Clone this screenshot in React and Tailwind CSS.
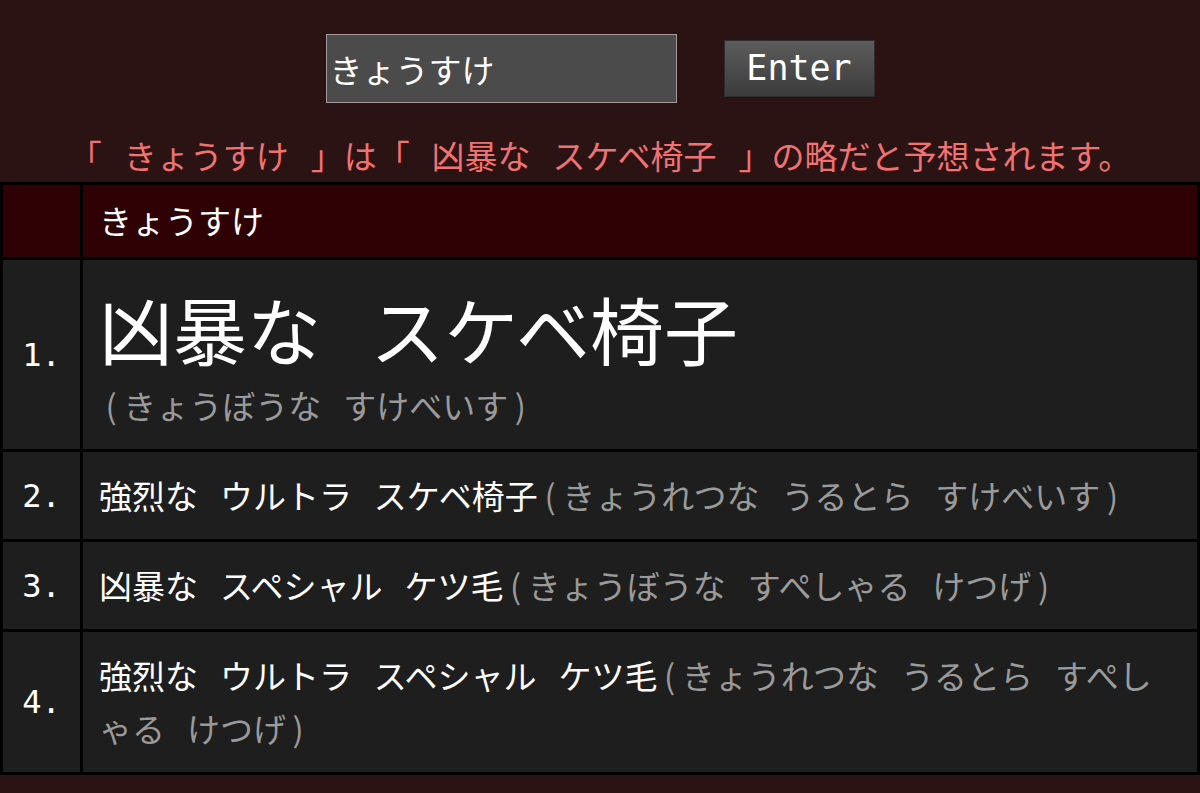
import React from "react";

const jp = { fontFamily: '"Noto Sans CJK JP", "Noto Sans", sans-serif' };
const mono = { fontFamily: '"DejaVu Sans Mono", "Liberation Mono", monospace' };

function Row({ num, children }) {
  return (
    <div className="flex border-t-[3px] border-black bg-[#1e1e1e]">
      <div
        className="w-[80px] shrink-0 flex items-center justify-center text-[32px] text-white border-r-[3px] border-black"
        style={mono}
      >
        {num}
      </div>
      <div className="flex-1 min-w-0 pl-[16px] pr-[18px] py-[17px] text-[33px] leading-[53px] text-white [line-break:anywhere] [word-spacing:0.44em]">
        {children}
      </div>
    </div>
  );
}

function Yomi({ children }) {
  return <span className="text-[#9a9a9a]">{children}</span>;
}

function P({ children }) {
  return <span className="mx-[0.2em]">{children}</span>;
}

export default function App() {
  return (
    <div className="min-h-[793px] w-full bg-[#2b1213] pt-[34px]" style={jp} lang="ja">
      <div className="flex justify-center items-center gap-[47px]">
        <input
          readOnly
          defaultValue="きょうすけ"
          className="w-[351px] h-[69px] bg-[#4b4b4b] border border-[#a59a9a] text-white text-[33px] pl-[3px] outline-none"
          style={jp}
        />
        <button
          className="w-[151px] h-[57px] border border-[#2e2e2e] bg-gradient-to-b from-[#5c5c5c] to-[#3c3c3c] text-white text-[35px] leading-none"
          style={mono}
        >
          Enter
        </button>
      </div>
      <div className="mt-[28px] h-[51px] text-center text-[33px] leading-[48px] text-[#f07272] whitespace-nowrap [word-spacing:0.44em]">
        「 きょうすけ 」は「 凶暴な スケベ椅子 」の略だと予想されます。
      </div>
      <div className="border-x-[3px] border-b-[3px] border-black">
        <div className="flex border-t-[3px] border-black bg-[#2e0204] h-[75px]">
          <div className="w-[80px] shrink-0 border-r-[3px] border-black" />
          <div className="flex-1 pl-[16px] flex items-center text-[33px] text-white">きょうすけ</div>
        </div>
        <Row num="1.">
          <div className="text-[74px] leading-[102px] [word-spacing:0.44em]">凶暴な スケベ椅子</div>
          <div>
            <Yomi>
              <P>(</P>きょうぼうな すけべいす<P>)</P>
            </Yomi>
          </div>
        </Row>
        <Row num="2.">
          強烈な ウルトラ スケベ椅子
          <Yomi>
            <P>(</P>きょうれつな うるとら すけべいす<P>)</P>
          </Yomi>
        </Row>
        <Row num="3.">
          凶暴な スペシャル ケツ毛
          <Yomi>
            <P>(</P>きょうぼうな すぺしゃる けつげ<P>)</P>
          </Yomi>
        </Row>
        <Row num="4.">
          強烈な ウルトラ スペシャル ケツ毛
          <Yomi>
            <P>(</P>きょうれつな うるとら すぺしゃる けつげ<P>)</P>
          </Yomi>
        </Row>
      </div>
    </div>
  );
}
